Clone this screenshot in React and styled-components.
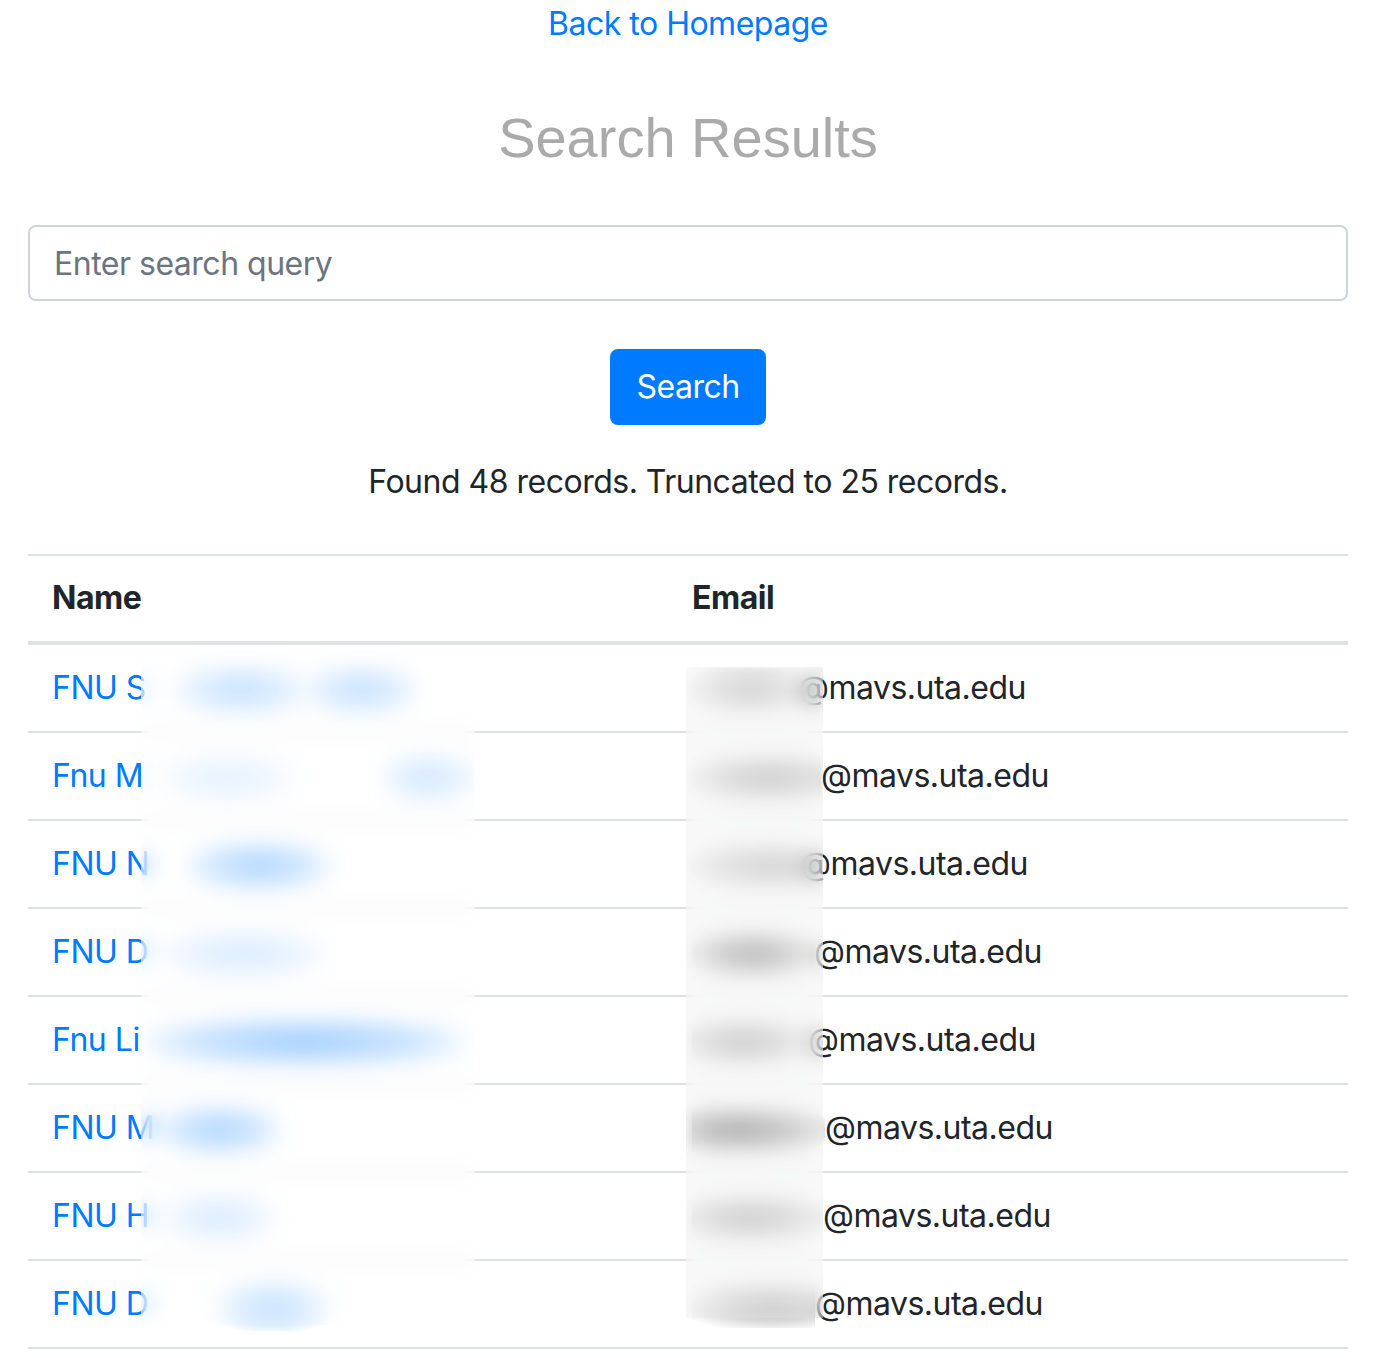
import React from "react";
import styled, { createGlobalStyle } from "styled-components";

const GlobalStyle = createGlobalStyle`
  body {
    margin: 0;
    background: #fff;
    font-family: Inter, "Noto Sans", "Liberation Sans", sans-serif;
    font-size: 32px;
    line-height: 48px;
    letter-spacing: -0.5px;
    color: #212529;
  }
  * { box-sizing: border-box; }
`;

const Page = styled.div`
  padding: 0 34px 0 28px;
  display: flex;
  flex-direction: column;
  align-items: center;
`;

const HomeLink = styled.a`
  color: #007bff;
  text-decoration: none;
  line-height: 48px;
`;

const Title = styled.h3`
  margin: 56px 0 54px;
  font-family: "Liberation Sans", Arial, sans-serif;
  font-weight: 400;
  font-size: 56px;
  line-height: 67px;
  letter-spacing: 0;
  color: #aaaaaa;
`;

const SearchForm = styled.form`
  width: 100%;
  display: flex;
  flex-direction: column;
  align-items: center;
`;

const SearchInput = styled.input`
  width: 100%;
  height: 76px;
  padding: 12px 24px;
  font: inherit;
  letter-spacing: inherit;
  color: #495057;
  border: 2px solid #ced4da;
  border-radius: 8px;
  outline: none;
  &::placeholder {
    color: #6c757d;
  }
`;

const SearchButton = styled.button`
  margin-top: 48px;
  height: 76px;
  padding: 12px 24px;
  font: inherit;
  letter-spacing: inherit;
  color: #fff;
  background: #007bff;
  border: 2px solid #007bff;
  border-radius: 8px;
`;

const Summary = styled.p`
  margin: 33px 0 48px;
`;

const TableWrap = styled.div`
  position: relative;
  width: 100%;
`;

const Table = styled.table`
  width: 100%;
  border-collapse: collapse;
`;

const Th = styled.th`
  text-align: left;
  font-weight: 700;
  padding: 18px 24px 19px;
  border-top: 2px solid #dee2e6;
  border-bottom: 4px solid #dee2e6;
  width: ${(p) => p.w || "auto"};
`;

const Td = styled.td`
  padding: 19px 24px;
  border-bottom: 2px solid #dee2e6;
  white-space: nowrap;
`;

const NameLink = styled.a`
  color: #007bff;
  text-decoration: none;
`;

/* redacted parts of names / addresses, drawn as soft smudges */
const Smudge = styled.span`
  display: inline-block;
  vertical-align: middle;
  height: ${(p) => p.h || 34}px;
  margin-top: -8px;
  margin-bottom: -8px;
  margin-left: ${(p) => p.gap || 0}px;
  width: ${(p) => p.w}px;
  background: radial-gradient(
    ellipse at ${(p) => p.at || 50}% 50%,
    rgba(${(p) => p.rgb}, ${(p) => p.ink}) 0%,
    rgba(${(p) => p.rgb}, ${(p) => p.ink * 0.55}) 50%,
    rgba(${(p) => p.rgb}, 0) 85%
  );
`;

const Blur = styled.div`
  position: absolute;
  left: ${(p) => p.left}px;
  top: ${(p) => p.top}px;
  width: ${(p) => p.width}px;
  height: ${(p) => p.height}px;
  backdrop-filter: blur(${(p) => p.amount}px);
  -webkit-backdrop-filter: blur(${(p) => p.amount}px);
  background: ${(p) => p.tint};
`;

const BLUE = "0, 123, 255";
const GREY = "60, 60, 60";

const rows = [
  { name: "FNU S", blobs: [{ gap: 30, w: 130, ink: 0.3 }, { w: 110, ink: 0.3 }], w: 106, ink: 0.3, at: 55 },
  { name: "Fnu M", blobs: [{ gap: 20, w: 130, ink: 0.14 }, { gap: 90, w: 90, ink: 0.24 }], w: 129, ink: 0.35, at: 60 },
  { name: "FNU N", blobs: [{ gap: 40, w: 140, ink: 0.42 }], w: 108, ink: 0.3, at: 75 },
  { name: "FNU D", blobs: [{ gap: 15, w: 160, ink: 0.2 }], w: 122, ink: 0.5, at: 50 },
  { name: "Fnu Li", blobs: [{ gap: 10, w: 310, ink: 0.5 }], w: 116, ink: 0.35, at: 45 },
  { name: "FNU M", blobs: [{ gap: 5, w: 120, ink: 0.42 }], w: 133, ink: 0.6, at: 35 },
  { name: "FNU H", blobs: [{ gap: 15, w: 110, ink: 0.2 }], w: 131, ink: 0.35, at: 45 },
  { name: "FNU D", blobs: [{ gap: 70, w: 110, ink: 0.3 }], w: 123, ink: 0.35, at: 65 },
];

export default function App() {
  return (
    <>
      <GlobalStyle />
      <Page>
        <HomeLink href="#">Back to Homepage</HomeLink>
        <Title>Search Results</Title>
        <SearchForm onSubmit={(e) => e.preventDefault()}>
          <SearchInput placeholder="Enter search query" />
          <SearchButton type="submit">Search</SearchButton>
        </SearchForm>
        <Summary>Found 48 records. Truncated to 25 records.</Summary>
        <TableWrap>
          <Table>
            <thead>
              <tr>
                <Th w="640px">Name</Th>
                <Th>Email</Th>
              </tr>
            </thead>
            <tbody>
              {rows.map((r, i) => (
                <tr key={i}>
                  <Td>
                    <NameLink href="#">
                      {r.name}
                      {r.blobs.map((b, j) => (
                        <Smudge key={j} gap={b.gap} w={b.w} h={50} ink={b.ink} rgb={BLUE} />
                      ))}
                    </NameLink>
                  </Td>
                  <Td>
                    <Smudge w={r.w} h={44} ink={r.ink} at={r.at} rgb={GREY} />@mavs.uta.edu
                  </Td>
                </tr>
              ))}
            </tbody>
          </Table>
          <Blur left={113} top={96} width={334} height={675} amount={10} tint="rgba(255,255,255,0.25)" />
          <Blur left={658} top={113} width={137} height={651} amount={10} tint="rgba(238,238,238,0.35)" />
        </TableWrap>
      </Page>
    </>
  );
}
